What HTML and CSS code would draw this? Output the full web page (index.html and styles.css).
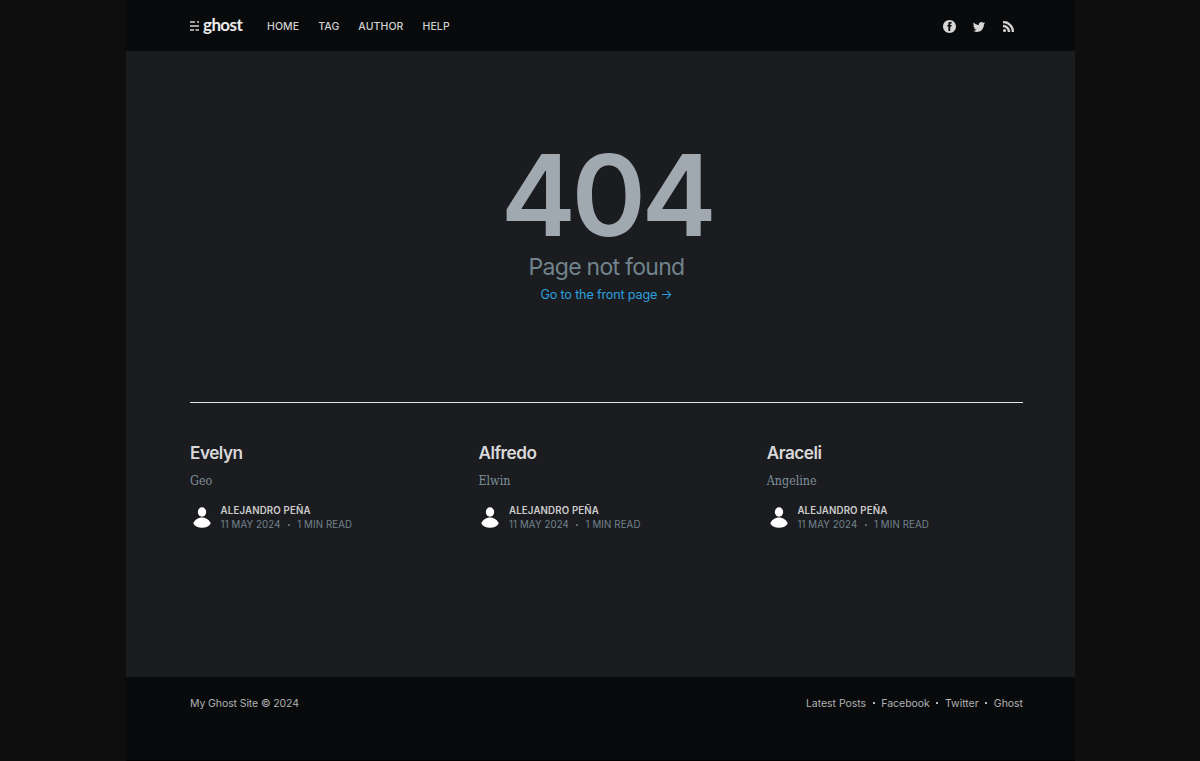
FILE: index.html
```html
<!DOCTYPE html>
<html lang="en">
<head>
<meta charset="utf-8">
<title>404 — Page not found</title>
<link rel="stylesheet" href="styles.css">
</head>
<body>
<div class="site">
  <header class="header">
    <a class="logo">
      <svg class="logo-mark" viewBox="0 0 9 10"><path d="M0 0h5v2H0zM7 0h2v2H7zM0 4h9v2H0zM0 8h4v2H0zM5.500 8H9v2H5.500z"/></svg>
      <span class="logo-text">ghost</span>
    </a>
    <nav class="nav"><a>HOME</a><a>TAG</a><a>AUTHOR</a><a>HELP</a></nav>
    <div class="social">
      <svg class="facebook" viewBox="0 0 32 32"><path d="M16 0c8.837 0 16 7.163 16 16s-7.163 16-16 16S0 24.837 0 16 7.163 0 16 0zm5.204 4.911h-3.546c-2.103 0-4.443.885-4.443 3.934.01 1.062 0 2.08 0 3.225h-2.433v3.872h2.509v11.147h4.61v-11.22h3.042l.275-3.81h-3.397s.007-1.695 0-2.187c0-1.205 1.253-1.136 1.329-1.136.596 0 1.756.002 2.054 0V4.911z"/></svg>
      <svg class="twitter" viewBox="0 0 32 32"><path d="M30.063 7.313c-.813 1.125-1.75 2.125-2.875 2.938v.75c0 1.563-.188 3.125-.688 4.625a15.088 15.088 0 0 1-2.063 4.438c-.875 1.438-2 2.688-3.25 3.813a15.015 15.015 0 0 1-4.625 2.563c-1.813.688-3.75 1-5.75 1-3.25 0-6.188-.875-8.875-2.625.438.063.875.125 1.375.125 2.688 0 5.063-.875 7.188-2.5-1.25 0-2.375-.375-3.375-1.125s-1.688-1.688-2.063-2.875c.438.063.813.125 1.125.125.5 0 1-.063 1.5-.25-1.313-.25-2.438-.938-3.313-1.938a5.673 5.673 0 0 1-1.313-3.688v-.063c.813.438 1.688.688 2.625.688a5.228 5.228 0 0 1-1.875-2c-.5-.875-.688-1.813-.688-2.75 0-1.063.25-2.063.75-2.938 1.438 1.75 3.188 3.188 5.25 4.25s4.313 1.688 6.688 1.813a5.579 5.579 0 0 1 1.5-5.438c1.125-1.125 2.5-1.688 4.125-1.688s3.063.625 4.188 1.813a11.48 11.48 0 0 0 3.688-1.375c-.438 1.375-1.313 2.438-2.563 3.188 1.125-.125 2.188-.438 3.313-.875z"/></svg>
      <svg class="rss" viewBox="4 4.44 15.56 15.56"><circle cx="6.18" cy="17.82" r="2.18"/><path stroke="#d6d6d6" stroke-width=".6" d="M4 4.44v2.83c7.03 0 12.73 5.7 12.73 12.73h2.83c0-8.59-6.97-15.56-15.56-15.56zm0 5.66v2.83c3.9 0 7.07 3.17 7.07 7.07h2.83c0-5.47-4.43-9.9-9.9-9.9z"/></svg>
    </div>
  </header>
  <main class="main">
    <section class="error">
      <h1 class="error-code">404</h1>
      <p class="error-text">Page not found</p>
      <a class="error-link">Go to the front page →</a>
    </section>
    <section class="feed">
      <article class="card">
        <h2 class="card-title">Evelyn</h2>
        <p class="card-excerpt">Geo</p>
        <div class="meta">
          <svg class="avatar" viewBox="0 0 18 21"><ellipse cx="9" cy="5" rx="4.200" ry="4.700"/><path d="M.3 16.500C1.500 13 5 10.500 9 10.500s7.500 2.500 8.700 6C16 19.400 13 20.800 9 20.800S2 19.400.3 16.500z"/></svg>
          <div><div class="author">ALEJANDRO PEÑA</div><div class="date">11 MAY 2024<i class="dot"></i>1 MIN READ</div></div>
        </div>
      </article>
      <article class="card">
        <h2 class="card-title">Alfredo</h2>
        <p class="card-excerpt">Elwin</p>
        <div class="meta">
          <svg class="avatar" viewBox="0 0 18 21"><ellipse cx="9" cy="5" rx="4.200" ry="4.700"/><path d="M.3 16.500C1.500 13 5 10.500 9 10.500s7.500 2.500 8.700 6C16 19.400 13 20.800 9 20.800S2 19.400.3 16.500z"/></svg>
          <div><div class="author">ALEJANDRO PEÑA</div><div class="date">11 MAY 2024<i class="dot"></i>1 MIN READ</div></div>
        </div>
      </article>
      <article class="card">
        <h2 class="card-title">Araceli</h2>
        <p class="card-excerpt">Angeline</p>
        <div class="meta">
          <svg class="avatar" viewBox="0 0 18 21"><ellipse cx="9" cy="5" rx="4.200" ry="4.700"/><path d="M.3 16.500C1.500 13 5 10.500 9 10.500s7.500 2.500 8.700 6C16 19.400 13 20.800 9 20.800S2 19.400.3 16.500z"/></svg>
          <div><div class="author">ALEJANDRO PEÑA</div><div class="date">11 MAY 2024<i class="dot"></i>1 MIN READ</div></div>
        </div>
      </article>
    </section>
  </main>
  <footer class="footer">
    <div>My Ghost Site © 2024</div>
    <nav class="footer-nav"><a>Latest Posts</a><i></i><a>Facebook</a><i></i><a>Twitter</a><i></i><a>Ghost</a></nav>
  </footer>
</div>
</body>
</html>
```
FILE: styles.css
```css
* { box-sizing: border-box; }
body {
  margin: 0;
  background: #0e0e0e;
  font-family: Inter, "Liberation Sans", sans-serif;
  color: #d9d9d9;
}
h1, h2, p { margin: 0; }
svg { display: block; fill: #d6d6d6; }
.site {
  width: 949px;
  height: 761px;
  margin-left: 126px;
  display: flex;
  flex-direction: column;
  background: #090a0c;
}
.header {
  height: 51px;
  padding: 0 61.5px 0 64px;
  display: flex;
  align-items: center;
}
.logo { display: flex; align-items: center; gap: 4px; width: 77px; height: 52px; }
.logo-mark { width: 9px; height: 10px; fill: #a0a0a0; margin-top: 1px; }
.logo-text {
  margin-top: -2px;
  font: 700 17px/20px Lato, sans-serif;
  letter-spacing: -0.6px;
  color: #ececec;
}
.nav { display: flex; gap: 19px; font-size: 10.5px; font-weight: 500; line-height: 16px; letter-spacing: 0.1px; padding-top: 2px; color: #d0d0d0; }
.social { display: flex; align-items: center; margin-left: auto; padding-top: 2px; }
.facebook { width: 13px; height: 13px; }
.twitter { width: 14px; height: 14px; margin-left: 16px; }
.rss { width: 11px; height: 11px; margin: 0 0 0 17px; }
.main { height: 626px; padding: 0 52px 0 64px; background: #1b1c20; }
.error { height: 352px; padding-top: 88px; text-align: center; border-bottom: 1px solid #e3e5e6; width: 833px; }
.error-code { font-size: 113px; line-height: 113px; font-weight: 560; letter-spacing: -4.6px; color: #9fa9af; }
.error-text { margin-top: 2px; font-size: 23px; line-height: 26px; letter-spacing: -0.72px; color: #71838c; }
.error-link { display: block; margin-top: 7px; font-size: 12.7px; line-height: 16px; color: #2b9fdc; letter-spacing: -0.2px; }
.feed { display: grid; grid-template-columns: repeat(3, 256.4px); column-gap: 32px; padding-top: 39px; }
.card-title { font-size: 17.2px; line-height: 22px; font-weight: 600; letter-spacing: -0.5px; }
.card-excerpt { margin-top: 9px; font: 12.4px/16px "DejaVu Serif Condensed", "DejaVu Serif", serif; font-stretch: condensed; color: #7e8f99; }
.meta { display: flex; margin-top: 15px; font-size: 9.7px; line-height: 14px; letter-spacing: 0.2px; }
.avatar { width: 18px; height: 21px; fill: #fff; margin: 3px 9.6px 0 3px; flex: none; }
.author { font-weight: 600; color: #ccc; white-space: nowrap; letter-spacing: 0.15px; }
.date { color: #71838c; display: flex; align-items: center; white-space: nowrap; letter-spacing: 0.12px; }
.dot { width: 2px; height: 2px; margin: 0 7.3px; border-radius: 1px; background: #71838c; }
.footer { flex: 1; padding: 19px 52px 0 64px; display: flex; justify-content: space-between; font-size: 10.5px; line-height: 16px; letter-spacing: -0.1px; color: #b0b1b2; border-bottom: 1px solid #000; }
.footer-nav { display: flex; height: 16px; align-items: center; letter-spacing: -0.03px; }
.footer-nav i { width: 2px; height: 2px; margin: 0 6.6px 2px 6.6px; background: #b8b8b8; }
```
